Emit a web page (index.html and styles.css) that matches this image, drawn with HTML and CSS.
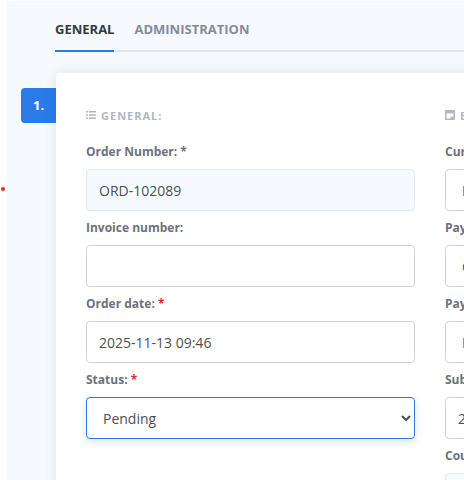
FILE: index.html
```html
<!DOCTYPE html>
<html>
<head>
  <title>Order</title>
  <link rel="stylesheet" href="styles.css">
</head>
<body>
  <span class="dot"></span>
  <div class="page">
    <div class="tabs">
      <a class="tab active">GENERAL</a>
      <a class="tab">ADMINISTRATION</a>
    </div>

    <div class="step-row">
      <div class="step">1.</div>
      <div class="card">
        <div class="col">
          <div class="section-title">
            <svg class="section-icon" viewBox="0 0 10 10"><path d="M0 1h2v1.500H0zM3 1h7v1.500H3zM0 4.300h2v1.500H0zM3 4.300h7v1.500H3zM0 7.500h2V9H0zM3 7.500h7V9H3z"/></svg>
            GENERAL:
          </div>
          <label>Order Number: *</label>
          <input class="field readonly" type="text" value="ORD-102089" readonly>
          <label>Invoice number:</label>
          <input class="field" type="text">
          <label>Order date: <span class="req">*</span></label>
          <input class="field" type="text" value="2025-11-13 09:46">
          <label>Status: <span class="req">*</span></label>
          <select class="field focused">
            <option>Pending</option>
          </select>
        </div>

        <div class="col">
          <div class="section-title">
            <svg class="section-icon" viewBox="0 0 10 10"><path fill-rule="evenodd" d="M1 0h8a1 1 0 0 1 1 1v8a1 1 0 0 1-1 1H1a1 1 0 0 1-1-1V1a1 1 0 0 1 1-1zM1.500 3.500V8.500h4V6.500h3v-3z"/></svg>
            BILLING:
          </div>
          <label>Currency:</label>
          <select class="field"><option>EUR</option></select>
          <label>Payment method:</label>
          <select class="field"><option>Card</option></select>
          <label>Payment status:</label>
          <select class="field"><option>Paid</option></select>
          <label>Subtotal:</label>
          <input class="field" type="text" value="249.00">
          <label>Country:</label>
          <input class="field readonly" type="text">
        </div>
      </div>
    </div>
  </div>
</body>
</html>
```

FILE: styles.css
```css
html, body {
  height: 480px;
  margin: 0;
  overflow: hidden;
}

body {
  position: relative;
  background-color: #ffffff;
  font-family: "Open Sans", "Noto Sans", sans-serif;
  color: #495057;
}

/* Small marker on the page edge */
.dot {
  position: absolute;
  left: 1px;
  top: 187px;
  width: 4px;
  height: 4px;
  border-radius: 50%;
  background-color: #e8262d;
}

.page {
  width: 458px;
  height: 479px;
  margin: 1px 0 0 6px;
  overflow: hidden;
  background-color: #f6f9fd;
}

/* Tabs */
.tabs {
  display: flex;
  gap: 20px;
  width: 409px;
  margin-left: 49px;
  height: 51px;
  box-sizing: border-box;
  border-bottom: 2px solid #e2e5e9;
}

.tab {
  height: 51px;
  box-sizing: border-box;
  padding-top: 19px;
  font-size: 13px;
  line-height: 18px;
  font-weight: 700;
  color: #868a9e;
}

.tab.active {
  color: #343a40;
  border-bottom: 2px solid #2a7ae8;
}

/* Step badge and card */
.step-row {
  display: flex;
  align-items: flex-start;
  padding: 21px 0 0 15px;
}

.step {
  flex: none;
  width: 35px;
  height: 35px;
  margin-top: 15px;
  box-sizing: border-box;
  padding-left: 12px;
  border-radius: 4px 0 0 4px;
  background-color: #2a7ae8;
  color: #ffffff;
  font-size: 13px;
  line-height: 34px;
  font-weight: 700;
}

.card {
  flex: none;
  display: grid;
  grid-template-columns: 329px 329px;
  gap: 30px;
  width: 748px;
  height: 500px;
  padding: 33px 30px 0;
  box-sizing: border-box;
  border-radius: 4px;
  background-color: #ffffff;
  box-shadow: 0 0 12px rgba(60, 70, 90, 0.12);
}

.section-title {
  display: flex;
  align-items: center;
  gap: 5px;
  height: 18px;
  margin-bottom: 19px;
  font-size: 11px;
  font-weight: 700;
  letter-spacing: 1px;
  color: #b1b7c1;
}

.section-icon {
  width: 10px;
  height: 10px;
  fill: #b1b7c1;
}

label {
  display: block;
  height: 19px;
  margin-bottom: 7px;
  font-size: 12px;
  line-height: 18px;
  font-weight: 700;
  color: #6c717c;
}

.req {
  color: #e8262d;
}

/* Form fields */
.field {
  display: block;
  width: 100%;
  height: 42px;
  margin-bottom: 8px;
  padding: 0 12px;
  box-sizing: border-box;
  border: 1px solid #ced4da;
  border-radius: 4px;
  background-color: #ffffff;
  font-family: inherit;
  font-size: 14px;
  color: #495057;
}

.field.readonly {
  border-color: #e6eaef;
  background-color: #f6f9fd;
}

.field.focused {
  border-color: #2a7ae8;
  box-shadow: 0 3px 8px rgba(60, 70, 90, 0.15);
}
```
